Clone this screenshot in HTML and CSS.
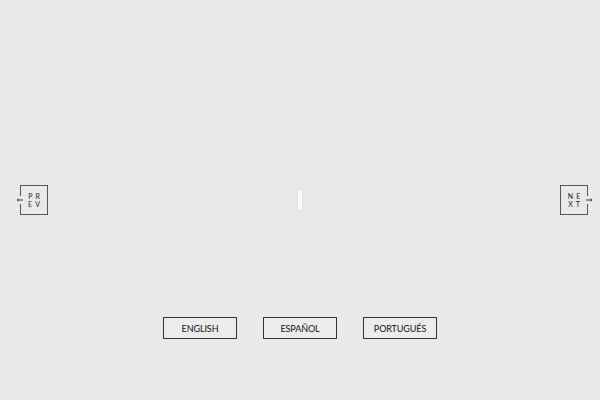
FILE: index.html
```html
<!DOCTYPE html>
<html lang="en">
<head>
<meta charset="utf-8">
<title>Slider</title>
<link rel="stylesheet" href="styles.css">
</head>
<body>
<div class="slider">
  <div class="stage">
    <button class="nav nav-prev" aria-label="Previous">
      <svg class="arrow arrow-left" width="10" height="10" viewBox="0 0 10 10">
        <rect x="3" y="1" width="4" height="8" fill="#e9e9e9"/>
        <line x1="1" y1="5" x2="7" y2="5" stroke="#333" stroke-width="1"/>
        <path d="M2.5 3.5 L1 5 L2.5 6.5" fill="none" stroke="#333" stroke-width="0.8"/>
      </svg>
      <span class="nav-text">PR<br>EV</span>
    </button>
    <div class="loader"></div>
    <button class="nav nav-next" aria-label="Next">
      <span class="nav-text">NE<br>XT</span>
      <svg class="arrow arrow-right" width="10" height="10" viewBox="0 0 10 10">
        <rect x="3" y="1" width="4" height="8" fill="#e9e9e9"/>
        <line x1="3" y1="5" x2="9" y2="5" stroke="#333" stroke-width="1"/>
        <path d="M7.5 3.5 L9 5 L7.5 6.5" fill="none" stroke="#333" stroke-width="0.8"/>
      </svg>
    </button>
  </div>
  <div class="langs">
    <button class="lang">ENGLISH</button>
    <button class="lang">ESPAÑOL</button>
    <button class="lang">PORTUGUÉS</button>
  </div>
</div>
</body>
</html>
```
FILE: styles.css
```css
html, body {
  margin: 0;
  padding: 0;
  background: #e9e9e9;
}
body {
  width: 600px;
  height: 400px;
  overflow: hidden;
  font-family: "Lato", "Liberation Sans", sans-serif;
}
.slider {
  display: flex;
  flex-direction: column;
  height: 400px;
}
.stage {
  margin-top: 185px;
  padding: 0 20px;
  display: grid;
  grid-template-columns: 1fr auto 1fr;
  align-items: center;
  height: 30px;
}
.nav {
  position: relative;
  box-sizing: border-box;
  width: 28px;
  height: 30px;
  border: 1px solid #555;
  background: transparent;
  padding: 0;
  margin: 0;
  display: flex;
  align-items: center;
  justify-content: center;
  cursor: pointer;
}
.nav-prev { justify-self: start; }
.nav-next { justify-self: end; margin-right: -8px; }
.nav-text {
  font-size: 7px;
  line-height: 8px;
  letter-spacing: 3px;
  padding-left: 3px;
  color: #222;
  text-align: center;
  font-family: "Lato", "Liberation Sans", sans-serif;
}
.arrow {
  position: absolute;
  top: 9px;
}
.arrow-left { left: -5px; }
.arrow-right { right: -6px; }
.loader {
  width: 6px;
  height: 22px;
  background: #f9f9f9;
  border: 1px solid #e2e2e2;
  box-sizing: border-box;
  box-shadow: 0 0 2px rgba(0,0,0,0.06);
}
.langs {
  margin-top: 102px;
  display: flex;
  justify-content: center;
  gap: 26px;
}
.lang {
  box-sizing: border-box;
  width: 74px;
  height: 22px;
  border: 1px solid #333;
  background: #ececec;
  color: #111;
  font-family: "Lato", "Liberation Sans", sans-serif;
  font-size: 9px;
  letter-spacing: -0.1px;
  padding: 0;
  margin: 0;
  cursor: pointer;
}
```
